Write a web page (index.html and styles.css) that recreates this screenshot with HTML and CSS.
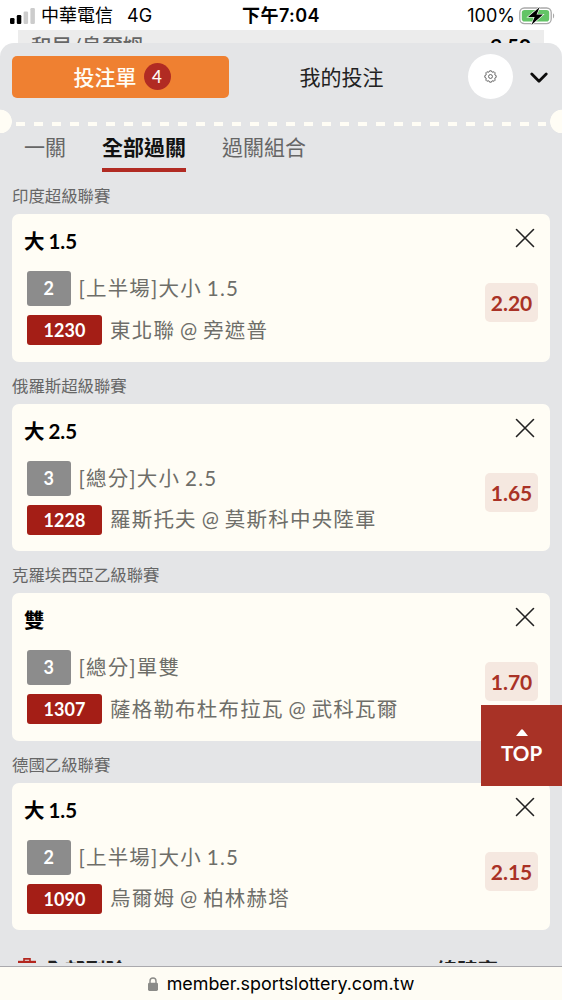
FILE: index.html
```html
<!DOCTYPE html>
<html lang="zh-Hant">
  <head>
    <meta charset="utf-8">
    <title>投注單</title>
    <link rel="stylesheet" href="styles.css">
  </head>

  <body>
    <div class="status-bar">
      <div class="carrier">
        <svg class="signal" width="26" height="16" viewBox="0 0 26 16">
          <rect x="0" y="10" width="4.5" height="6" rx="1.2" />
          <rect x="6.8" y="7" width="4.5" height="9" rx="1.2" />
          <rect x="13.6" y="3.5" width="4.5" height="12.5" rx="1.2" fill="#ccc" />
          <rect x="20.4" y="0" width="4.5" height="16" rx="1.2" fill="#ccc" />
        </svg>
        <span class="carrier-name">中華電信</span>
        <span>4G</span>
      </div>
      <div class="clock">下午7:04</div>
      <div class="battery">
        <span>100%</span>
        <svg width="36" height="20" viewBox="0 0 36 20">
          <rect x="0.8" y="2" width="31.4" height="15.6" rx="4.5" fill="none" stroke="#a9a9a9" stroke-width="1.3" />
          <rect x="2.8" y="4" width="27.4" height="11.6" rx="2.8" fill="#63c466" />
          <path d="M34 7.2c1.6.9 1.6 4.3 0 5.2z" fill="#a9a9a9" />
          <path d="M20.8 1 9 11h6.6l-3.2 8L24 8.6h-6.5z" stroke="#fff" stroke-width="1.2" paint-order="stroke" />
        </svg>
      </div>
    </div>

    <div class="page-behind">
      <span>和局/烏爾姆</span>
      <b>9.50</b>
    </div>

    <div class="sheet">
      <div class="sheet-header">
        <div class="slip-tab active">投注單<span class="count">4</span></div>
        <div class="slip-tab">我的投注</div>
        <div class="settings">
          <svg width="13" height="13" viewBox="0 0 14 14" fill="none" stroke="#444" stroke-width="0.85" stroke-linejoin="round">
            <path d="M5.6 2 6 .9h2L8.4 2l1.3.5 1.1-.7 1.4 1.4-.7 1.1.5 1.3 1.1.4v2l-1.1.4-.5 1.3.7 1.1-1.4 1.4-1.1-.7-1.3.5-.4 1.1H6L5.6 12l-1.3-.5-1.1.7-1.4-1.4.7-1.1L2 8.4.9 8V6L2 5.6l.5-1.3-.7-1.1 1.4-1.4 1.1.7z" />
            <circle cx="7" cy="7" r="2.1" />
          </svg>
        </div>
        <svg class="chevron" width="18" height="12" viewBox="0 0 18 12">
          <path d="M1.8 2 9 9.2 16.2 2" fill="none" stroke="#0c0c0c" stroke-width="2.8" stroke-linecap="round" stroke-linejoin="round" />
        </svg>
      </div>

      <div class="perforation"></div>

      <div class="modes">
        <div>一關</div>
        <div class="selected">全部過關</div>
        <div>過關組合</div>
      </div>

      <div class="league">印度超級聯賽</div>
      <div class="card">
        <div class="bet">
          <div class="pick">大 1.5</div>
          <div class="row"><span class="num">2</span>[上半場]大小 1.5</div>
          <div class="row teams"><span class="code">1230</span>東北聯 @ 旁遮普</div>
        </div>
        <div class="side">
          <svg class="close" width="20" height="20" viewBox="0 0 20 20"><path d="M1.5 1.5l17 17m0-17l-17 17" /></svg>
          <div class="odds">2.20</div>
        </div>
      </div>

      <div class="league">俄羅斯超級聯賽</div>
      <div class="card">
        <div class="bet">
          <div class="pick">大 2.5</div>
          <div class="row"><span class="num">3</span>[總分]大小 2.5</div>
          <div class="row teams"><span class="code">1228</span>羅斯托夫 @ 莫斯科中央陸軍</div>
        </div>
        <div class="side">
          <svg class="close" width="20" height="20" viewBox="0 0 20 20"><path d="M1.5 1.5l17 17m0-17l-17 17" /></svg>
          <div class="odds">1.65</div>
        </div>
      </div>

      <div class="league">克羅埃西亞乙級聯賽</div>
      <div class="card">
        <div class="bet">
          <div class="pick">雙</div>
          <div class="row"><span class="num">3</span>[總分]單雙</div>
          <div class="row teams"><span class="code">1307</span>薩格勒布杜布拉瓦 @ 武科瓦爾</div>
        </div>
        <div class="side">
          <svg class="close" width="20" height="20" viewBox="0 0 20 20"><path d="M1.5 1.5l17 17m0-17l-17 17" /></svg>
          <div class="odds">1.70</div>
        </div>
      </div>

      <div class="league">德國乙級聯賽</div>
      <div class="card">
        <div class="bet">
          <div class="pick">大 1.5</div>
          <div class="row"><span class="num">2</span>[上半場]大小 1.5</div>
          <div class="row teams"><span class="code">1090</span>烏爾姆 @ 柏林赫塔</div>
        </div>
        <div class="side">
          <svg class="close" width="20" height="20" viewBox="0 0 20 20"><path d="M1.5 1.5l17 17m0-17l-17 17" /></svg>
          <div class="odds">2.15</div>
        </div>
      </div>

      <div class="summary">
        <svg width="18" height="20" viewBox="0 0 18 20" fill="none" stroke="#b3261e" stroke-width="1.6">
          <path d="M6 3V.9h6V3M2.5 6V19h13V6" />
          <path d="M0 4h18" stroke-width="2.4" />
        </svg>
        <span class="delete-all">全部刪除</span>
        <span class="total">總賠率</span>
      </div>
    </div>

    <div class="top-button">
      <svg width="12" height="7" viewBox="0 0 12 7"><path d="M0 7 4.8 1q1.2-1.4 2.4 0L12 7z" fill="#fff" /></svg>
      TOP
    </div>

    <div class="address-bar">
      <svg width="10" height="14" viewBox="0 0 10 14">
        <rect x="0" y="5.8" width="10" height="8.2" rx="1.4" fill="#8b8b88" />
        <path d="M2 6.500V4a3 3 0 0 1 6 0v2.5" fill="none" stroke="#8b8b88" stroke-width="1.4" />
      </svg>
      member.sportslottery.com.tw
    </div>
  </body>
</html>
```

FILE: styles.css
```css
* {
  box-sizing: border-box;
}

body {
  margin: 0;
  height: 1000px;
  overflow: hidden;
  position: relative;
  display: flex;
  flex-direction: column;
  background: #fff;
  font-family: Lato, 'Noto Sans CJK TC', sans-serif;
  color: #000;
}

svg {
  display: block;
  flex: none;
}

/* phone status bar */
.status-bar {
  height: 30px;
  flex: none;
  padding: 0 7px 0 10px;
  display: grid;
  grid-template-columns: 1fr auto 1fr;
  align-items: center;
  font: 18px/30px Inter, 'Noto Sans CJK TC', sans-serif;
}

.carrier, .battery {
  display: flex;
  align-items: center;
}

.carrier > span, .clock, .battery > span {
  padding-top: 1px;
}

.carrier-name {
  margin: 0 14px 0 5px;
}

.clock {
  margin-right: 3px;
  font-weight: 600;
  letter-spacing: 0.4px;
}

.battery {
  justify-content: flex-end;
  gap: 4px;
}

/* strip of the page under the sheet */
.page-behind {
  height: 13px;
  flex: none;
  margin: 0 18px;
  padding: 0 13px;
  overflow: hidden;
  display: flex;
  justify-content: space-between;
  background: #ececec;
  font-size: 20.6px;
  line-height: 32px;
}

.page-behind span {
  color: #666;
  font-weight: 500;
}

.sheet {
  height: 923px;
  flex: none;
  padding: 11px 12px 0;
  background: #e4e5e7;
  border-radius: 14px 14px 0 0;
}

.sheet-header {
  height: 45px;
  display: flex;
  align-items: center;
}

.slip-tab {
  width: 226px;
  padding-right: 9px;
  text-align: center;
  font-size: 21px;
  line-height: 41px;
  color: #222;
}

.slip-tab.active {
  width: 217px;
  height: 42px;
  margin-right: 4px;
  padding: 0 0 1px 3px;
  display: flex;
  align-items: center;
  justify-content: center;
  border-radius: 5px;
  background: #ef8031;
  color: #fffdf5;
  font-weight: 500;
}

.count {
  width: 27px;
  height: 27px;
  margin-left: 7px;
  border-radius: 50%;
  background: #b12b23;
  font-size: 17px;
  line-height: 27px;
  text-align: center;
}

.settings {
  width: 45px;
  height: 45px;
  margin-left: 9px;
  display: flex;
  align-items: center;
  justify-content: center;
  border-radius: 50%;
  background: #fff;
}

.chevron {
  margin: 2px 0 0 17px;
}

.perforation {
  height: 24px;
  margin: 10px -12px 0;
  background:
    radial-gradient(circle at 0 12.5px, #fffdf5 11.5px, transparent 12.2px),
    radial-gradient(circle at 100% 12.5px, #fffdf5 11.5px, transparent 12.2px),
    repeating-linear-gradient(90deg, #fffdf5 0 9px, transparent 9px 18px) 16px 13px / 530px 4px no-repeat;
}

.modes {
  height: 39px;
  padding-left: 12px;
  display: flex;
  gap: 36px;
  font-size: 21px;
  line-height: 28px;
  color: #666;
}

.modes div {
  height: 39px;
}

.modes .selected {
  color: #111;
  font-weight: 700;
  border-bottom: 4px solid #b12b23;
}

.league {
  height: 42px;
  font-size: 16.4px;
  line-height: 48px;
  color: #666;
}

.card {
  height: 147.6px;
  padding: 12px 12px 0;
  display: flex;
  justify-content: space-between;
  border-radius: 7px;
  background: #fffdf5;
}

.pick {
  height: 30px;
  font-size: 20.5px;
  line-height: 30px;
  font-weight: 700;
  word-spacing: -1px;
}

.row {
  height: 35px;
  margin: 15px 0 9px 3px;
  padding-bottom: 1px;
  display: flex;
  align-items: center;
  white-space: pre;
  color: #6e6e69;
  font-size: 20.5px;
  line-height: 30px;
  letter-spacing: 1.2px;
  word-spacing: -1.6px;
}

.row.teams {
  height: 30px;
  margin: 0 0 0 3px;
}

.num, .code {
  height: 35px;
  width: 43.5px;
  margin: 1px 8px 0 0;
  border-radius: 3px;
  background: #8c8c8c;
  color: #fff;
  font-size: 18px;
  line-height: 35px;
  font-weight: 700;
  letter-spacing: 0;
  text-align: center;
}

.code {
  height: 30px;
  width: 75px;
  background: #a41e16;
  line-height: 30px;
}

.side {
  display: flex;
  flex-direction: column;
  align-items: flex-end;
}

.close {
  margin: 2px 3px 35px 0;
  fill: none;
  stroke: #222;
  stroke-width: 1.6;
  stroke-linecap: round;
}

.odds {
  width: 53px;
  height: 39px;
  border-radius: 5px;
  background: #f5e8e0;
  color: #a93226;
  font-size: 21px;
  line-height: 39px;
  font-weight: 700;
  text-align: center;
}

.summary {
  height: 33px;
  padding: 0 52px 0 6px;
  overflow: hidden;
  display: flex;
  align-items: flex-start;
  font-size: 20.5px;
  line-height: 30px;
  font-weight: 700;
  color: #222;
}

.summary svg {
  margin-top: 28px;
}

.summary span {
  margin-top: 25px;
}

.summary .delete-all {
  margin-left: 8px;
}

.summary .total {
  margin-left: auto;
}

/* floats over the cards */
.top-button {
  position: absolute;
  right: 0;
  top: 705px;
  width: 81px;
  height: 81px;
  padding-top: 24px;
  display: flex;
  flex-direction: column;
  align-items: center;
  background: #a83226;
  color: #fff;
  font-size: 20.6px;
  line-height: 35px;
  font-weight: 700;
}

.address-bar {
  height: 34px;
  flex: none;
  display: flex;
  align-items: center;
  justify-content: center;
  gap: 9px;
  border-top: 1px solid #aaa9ad;
  background: #fefcf4;
  font: 17.9px/32px Inter, sans-serif;
}
```
